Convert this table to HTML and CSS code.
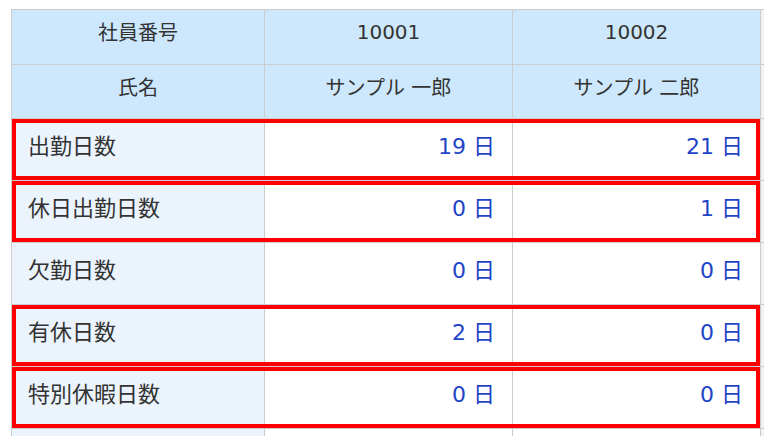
FILE: index.html
```html
<!DOCTYPE html>
<html lang="ja">
<head>
<meta charset="utf-8">
<link rel="stylesheet" href="styles.css">
</head>
<body>
<div class="page">
  <div class="sheet">
    <div class="row head h1">
      <div class="cell c-label center">社員番号</div>
      <div class="cell center">10001</div>
      <div class="cell center">10002</div>
      <div class="cell extra"></div>
    </div>
    <div class="row head h2">
      <div class="cell c-label center">氏名</div>
      <div class="cell center">サンプル 一郎</div>
      <div class="cell center">サンプル 二郎</div>
      <div class="cell extra"></div>
    </div>
    <div class="row data hl">
      <div class="cell c-label">出勤日数</div>
      <div class="cell num">19 日</div>
      <div class="cell num">21 日</div>
      <div class="cell extra"></div>
    </div>
    <div class="row data hl">
      <div class="cell c-label">休日出勤日数</div>
      <div class="cell num">0 日</div>
      <div class="cell num">1 日</div>
      <div class="cell extra"></div>
    </div>
    <div class="row data">
      <div class="cell c-label">欠勤日数</div>
      <div class="cell num">0 日</div>
      <div class="cell num">0 日</div>
      <div class="cell extra"></div>
    </div>
    <div class="row data hl">
      <div class="cell c-label">有休日数</div>
      <div class="cell num">2 日</div>
      <div class="cell num">0 日</div>
      <div class="cell extra"></div>
    </div>
    <div class="row data hl">
      <div class="cell c-label">特別休暇日数</div>
      <div class="cell num">0 日</div>
      <div class="cell num">0 日</div>
      <div class="cell extra"></div>
    </div>
    <div class="row data">
      <div class="cell c-label">&nbsp;</div>
      <div class="cell num">&nbsp;</div>
      <div class="cell num">&nbsp;</div>
      <div class="cell extra"></div>
    </div>
  </div>
</div>
</body>
</html>
```

FILE: styles.css
```css
html, body {
  margin: 0;
  padding: 0;
  background: #ffffff;
  overflow: hidden;
}

body {
  font-family: "DejaVu Sans", "Noto Sans CJK JP", sans-serif;
  color: #333333;
}

.page {
  padding: 9px 0 0 11px;
  width: 764px;
  box-sizing: border-box;
}

.sheet {
  border-top: 1px solid #cccccc;
  border-left: 1px solid #cccccc;
  width: 780px;
}

.row {
  position: relative;
  display: grid;
  grid-template-columns: 253px 248px 248px 1fr;
}

.cell {
  box-sizing: border-box;
  border-right: 1px solid #cccccc;
  border-bottom: 1px solid #cccccc;
  display: flex;
  align-items: center;
  white-space: nowrap;
}

.head .cell {
  background: #cde8fc;
  font-size: 20px;
  justify-content: center;
  padding-bottom: 11px;
}

.head.h1 .cell { height: 55px; }
.head.h2 .cell { height: 54px; }

.head .cell.extra,
.data .cell.extra {
  background: #f2f2f2;
}

.data .cell {
  height: 62px;
  font-size: 22px;
  background: #ffffff;
  padding-bottom: 11px;
}

.data .c-label {
  background: #ebf4fd;
  padding-left: 16px;
  color: #333333;
}

.data .num {
  justify-content: flex-end;
  padding-right: 17px;
  color: #1f44c6;
}

.row.hl::after {
  content: "";
  position: absolute;
  left: 0;
  top: 0;
  width: 748px;
  height: calc(100% - 1px);
  border: 4px solid #ff0000;
  box-sizing: border-box;
  pointer-events: none;
}
```
